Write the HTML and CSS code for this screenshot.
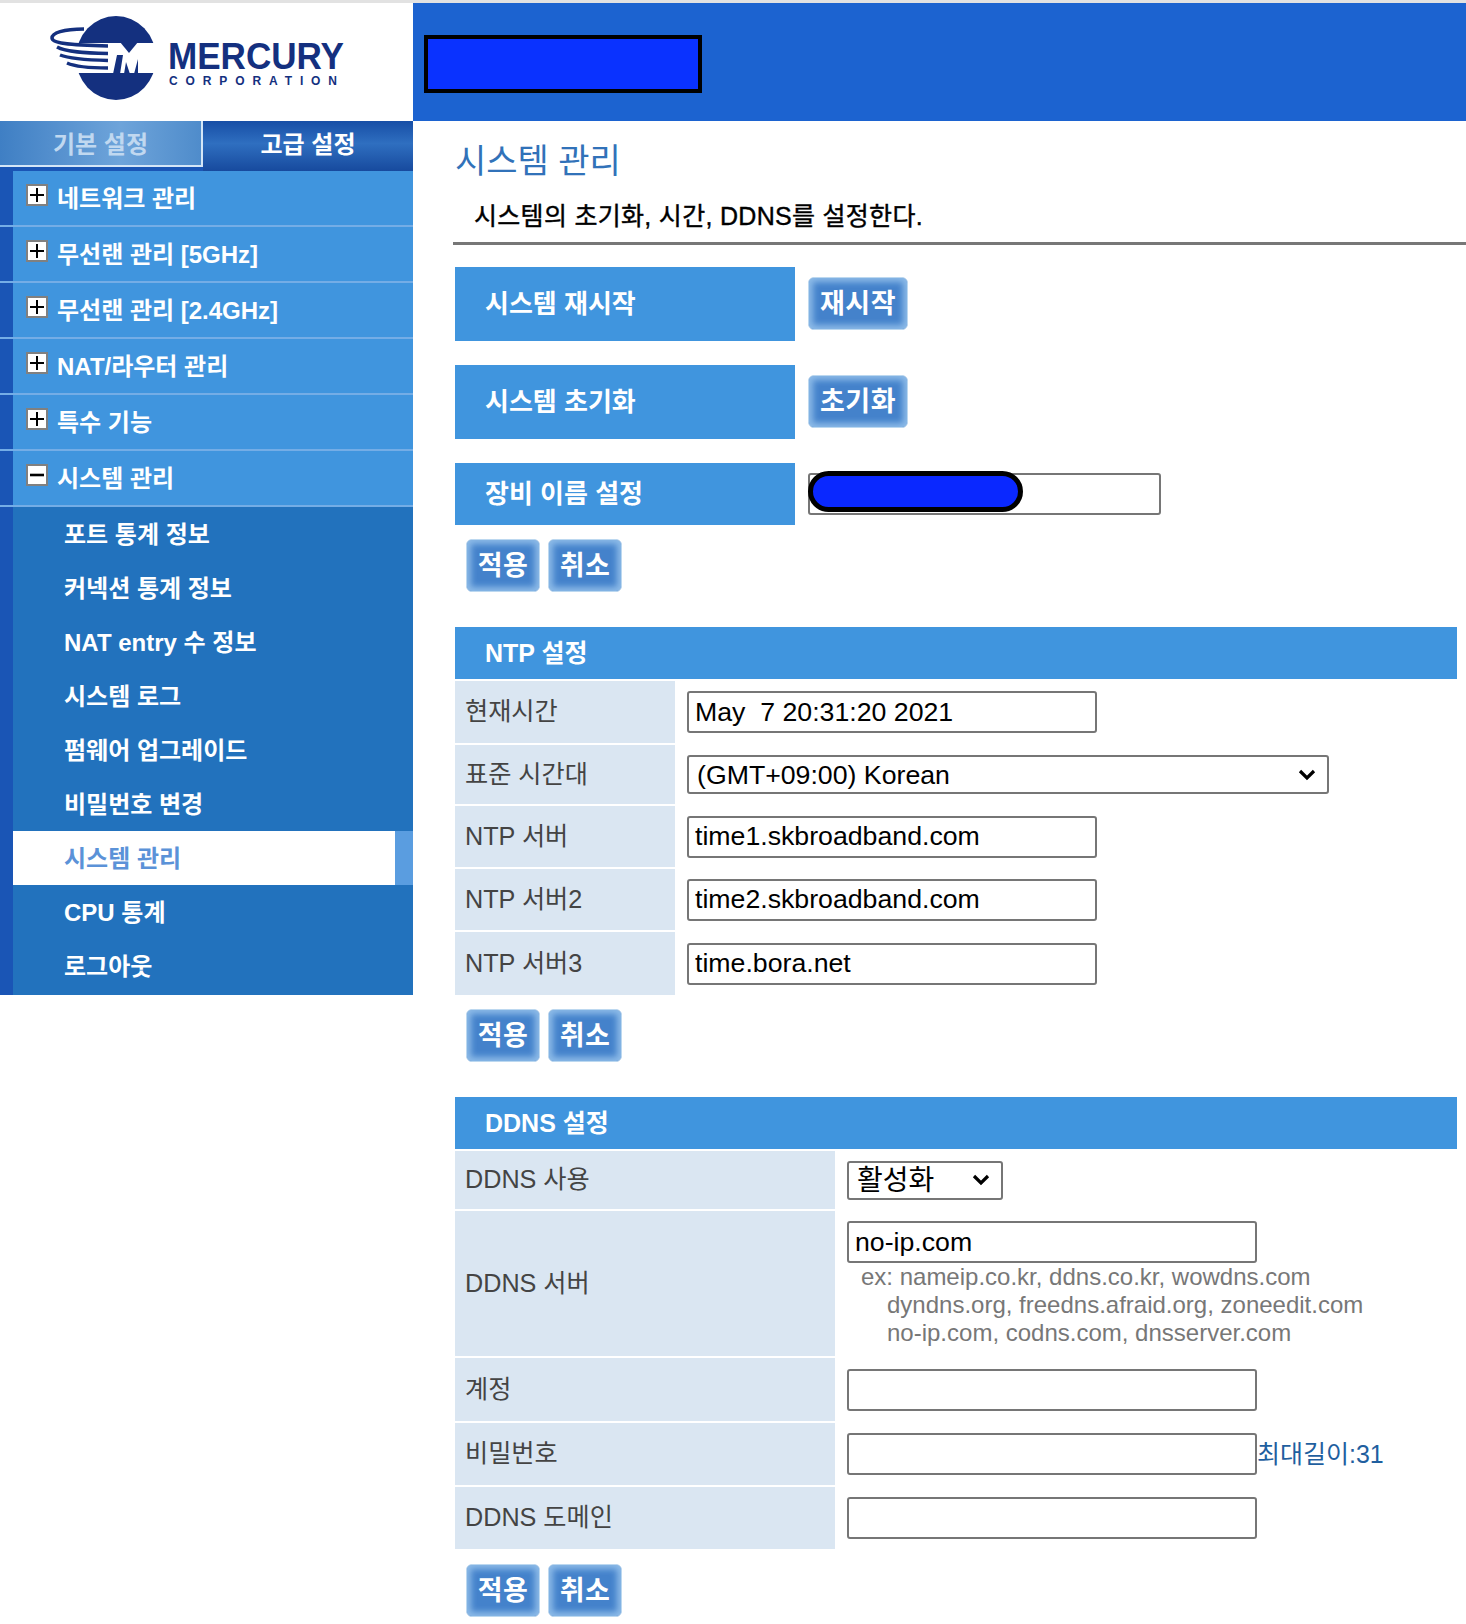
FILE: index.html
```html
<!DOCTYPE html>
<html lang="ko">
<head>
    <meta charset="UTF-8">
    <title>시스템 관리</title>
    <link rel="stylesheet" href="styles.css">
</head>
<body>
    <div class="top">
        <div class="logo">
            <svg width="413" height="118" viewBox="0 0 413 118">
                <ellipse cx="116" cy="55" rx="40" ry="42" fill="#14307f"/>
                <path d="M70 40 H158 V70 H70 Z" fill="#fff"/>
                <path d="M120 39 L129 50 L138 39 Z" fill="#14307f"/>
                <path d="M84 26 C63 26 52 30 52 35 C52 40 67 42 108 43" fill="none" stroke="#14307f" stroke-width="3.5"/>
                <path d="M57 44 C66 49 85 50 108 50.5 M60 52 C70 56 88 57 108 57.5 M67 60 C76 64 90 65 108 65" fill="none" stroke="#14307f" stroke-width="3.5"/>
                <path d="M117 52 L123 52 L120 71 L113 71 Z M124 71 L126 59 L130 71 Z M134 71 L138 56 L138 71 Z" fill="#14307f"/>
                <text x="168" y="66" class="logo-name" textLength="176" lengthAdjust="spacingAndGlyphs">MERCURY</text>
                <text x="169" y="82" class="logo-sub" textLength="168">CORPORATION</text>
            </svg>
        </div>
        <div class="banner"><div class="redact"></div></div>
    </div>

    <div class="wrap">
        <aside class="side">
            <div class="tabs">
                <div class="tab tab-off">기본 설정</div>
                <div class="tab tab-on">고급 설정</div>
            </div>
            <ul class="menu">
                <li class="menu-item"><svg class="ico" viewBox="0 0 22 22"><rect x="1" y="1" width="20" height="20" fill="#fff" stroke="#808080" stroke-width="2"/><path d="M4 11 H18 M11 4 V18" stroke="#000" stroke-width="2"/></svg>네트워크 관리</li>
                <li class="menu-item"><svg class="ico" viewBox="0 0 22 22"><rect x="1" y="1" width="20" height="20" fill="#fff" stroke="#808080" stroke-width="2"/><path d="M4 11 H18 M11 4 V18" stroke="#000" stroke-width="2"/></svg>무선랜 관리 [5GHz]</li>
                <li class="menu-item"><svg class="ico" viewBox="0 0 22 22"><rect x="1" y="1" width="20" height="20" fill="#fff" stroke="#808080" stroke-width="2"/><path d="M4 11 H18 M11 4 V18" stroke="#000" stroke-width="2"/></svg>무선랜 관리 [2.4GHz]</li>
                <li class="menu-item"><svg class="ico" viewBox="0 0 22 22"><rect x="1" y="1" width="20" height="20" fill="#fff" stroke="#808080" stroke-width="2"/><path d="M4 11 H18 M11 4 V18" stroke="#000" stroke-width="2"/></svg>NAT/라우터 관리</li>
                <li class="menu-item"><svg class="ico" viewBox="0 0 22 22"><rect x="1" y="1" width="20" height="20" fill="#fff" stroke="#808080" stroke-width="2"/><path d="M4 11 H18 M11 4 V18" stroke="#000" stroke-width="2"/></svg>특수 기능</li>
                <li class="menu-item"><svg class="ico" viewBox="0 0 22 22"><rect x="1" y="1" width="20" height="20" fill="#fff" stroke="#808080" stroke-width="2"/><path d="M4 11 H18" stroke="#000" stroke-width="2.6"/></svg>시스템 관리</li>
                <li class="sub-item">포트 통계 정보</li>
                <li class="sub-item">커넥션 통계 정보</li>
                <li class="sub-item">NAT entry 수 정보</li>
                <li class="sub-item">시스템 로그</li>
                <li class="sub-item">펌웨어 업그레이드</li>
                <li class="sub-item">비밀번호 변경</li>
                <li class="sub-item sub-on"><span>시스템 관리</span></li>
                <li class="sub-item">CPU 통계</li>
                <li class="sub-item sub-last">로그아웃</li>
            </ul>
        </aside>

        <main class="main">
            <h1 class="title">시스템 관리</h1>
            <p class="desc">시스템의 초기화, 시간, DDNS를 설정한다.</p>

            <div class="act-row">
                <div class="act-label">시스템 재시작</div>
                <button class="btn btn-wide">재시작</button>
            </div>
            <div class="act-row">
                <div class="act-label">시스템 초기화</div>
                <button class="btn btn-wide">초기화</button>
            </div>
            <div class="act-row act-name">
                <div class="act-label">장비 이름 설정</div>
                <div class="name-box"><input class="inp" type="text"><div class="redact-pill"></div></div>
            </div>
            <div class="btns"><button class="btn">적용</button><button class="btn">취소</button></div>

            <div class="sect">NTP 설정</div>
            <div class="form form-ntp">
                <div class="lab">현재시간</div>
                <div class="val"><input class="inp" type="text" value="May  7 20:31:20 2021"></div>
                <div class="lab">표준 시간대</div>
                <div class="val"><select class="sel sel-zone"><option>(GMT+09:00) Korean</option></select></div>
                <div class="lab">NTP 서버</div>
                <div class="val"><input class="inp" type="text" value="time1.skbroadband.com"></div>
                <div class="lab">NTP 서버2</div>
                <div class="val"><input class="inp" type="text" value="time2.skbroadband.com"></div>
                <div class="lab">NTP 서버3</div>
                <div class="val"><input class="inp" type="text" value="time.bora.net"></div>
            </div>
            <div class="btns"><button class="btn">적용</button><button class="btn">취소</button></div>

            <div class="sect">DDNS 설정</div>
            <div class="form form-ddns">
                <div class="lab">DDNS 사용</div>
                <div class="val"><select class="sel sel-on"><option>활성화</option></select></div>
                <div class="lab">DDNS 서버</div>
                <div class="val val-top">
                    <input class="inp" type="text" value="no-ip.com">
                    <div class="hint">ex: nameip.co.kr, ddns.co.kr, wowdns.com<br><span>dyndns.org, freedns.afraid.org, zoneedit.com</span><br><span>no-ip.com, codns.com, dnsserver.com</span></div>
                </div>
                <div class="lab">계정</div>
                <div class="val"><input class="inp" type="text"></div>
                <div class="lab">비밀번호</div>
                <div class="val"><input class="inp" type="text"><span class="maxlen">최대길이:31</span></div>
                <div class="lab">DDNS 도메인</div>
                <div class="val"><input class="inp" type="text"></div>
            </div>
            <div class="btns btns-last"><button class="btn">적용</button><button class="btn">취소</button></div>
        </main>
    </div>
</body>
</html>
```

FILE: styles.css
```css
* {
    box-sizing: border-box;
}
body {
    margin: 0;
    background: #fff;
    border-top: 3px solid #e2e2e2;
    font-family: "Liberation Sans", "Noto Sans CJK KR", sans-serif;
}
.top {
    display: flex;
    height: 118px;
}
.logo {
    width: 413px;
}
.logo svg {
    display: block;
}
.logo-name {
    font-family: "Liberation Sans", sans-serif;
    font-size: 37px;
    font-weight: bold;
    fill: #14307f;
}
.logo-sub {
    font-family: "Liberation Sans", sans-serif;
    font-size: 12px;
    font-weight: bold;
    fill: #14307f;
}
.banner {
    flex: 1;
    background: #1c63d0;
    padding: 32px 0 0 11px;
}
.redact {
    width: 278px;
    height: 58px;
    background: #0a32ff;
    border: 4px solid #000;
}

.wrap {
    display: flex;
}
.side {
    width: 413px;
}
.tabs {
    display: flex;
    height: 50px;
    background: #1a55b5;
}
.tab {
    text-align: center;
    font-size: 24px;
    line-height: 47px;
    font-weight: bold;
}
.tab-off {
    width: 203px;
    height: 46px;
    background: linear-gradient(to right, #3f7fc4, #6ea4da 60%, #4f8ccb);
    border-right: 2px solid #d4e6f7;
    border-bottom: 2px solid #d4e6f7;
    color: #c0d8f0;
}
.tab-on {
    flex: 1;
    background: linear-gradient(to bottom, #174ea6, #2f6fc0 45%, #174a9e);
    color: #fff;
}

.menu {
    list-style: none;
    margin: 0;
    padding: 0;
    color: #fff;
    font-size: 24px;
    font-weight: bold;
}
.menu-item {
    display: flex;
    align-items: center;
    height: 56px;
    padding: 0 0 3px 26px;
    background: linear-gradient(to right, #1a55b5 13px, #4095de 13px);
    border-bottom: 2px solid #74ade6;
}
.ico {
    width: 22px;
    height: 22px;
    margin: -3px 9px 0 0;
    flex: none;
}
.sub-item {
    height: 54px;
    line-height: 55px;
    padding-left: 64px;
    background: linear-gradient(to right, #1a55b5 13px, #2272bd 13px);
}
.sub-last {
    height: 56px;
}
.sub-on {
    padding: 0 0 0 13px;
}
.sub-on span {
    display: block;
    height: 54px;
    margin-right: 18px;
    padding-left: 51px;
    background: #fff;
    color: #5b92d8;
    box-shadow: 18px 0 0 #5a9de0;
}

.main {
    flex: 1;
    padding: 0 9px 0 42px;
}
.title {
    margin: 0;
    height: 76px;
    padding-top: 2px;
    font-size: 34px;
    font-weight: normal;
    line-height: 76px;
    color: #3172b9;
}
.desc {
    margin: 0 -9px 0 -2px;
    height: 48px;
    padding: 1px 0 0 21px;
    border-bottom: 3px solid #777;
    font-size: 25px;
    line-height: 36px;
    color: #000;
    -webkit-text-stroke: 0.4px #000;
    letter-spacing: 0.3px;
}
.act-row {
    display: flex;
    align-items: center;
    gap: 13px;
    height: 74px;
    margin-top: 24px;
}
.act-row:first-of-type {
    margin-top: 22px;
}
.act-name {
    height: 62px;
}
.act-label {
    width: 340px;
    height: 100%;
    padding: 0 0 5px 30px;
    display: flex;
    align-items: center;
    background: #4095de;
    color: #fff;
    font-size: 26px;
    font-weight: bold;
}
.btn {
    width: 74px;
    height: 53px;
    padding: 0 0 4px;
    background: #4482cb;
    border: 1px solid #bcd8f0;
    border-radius: 6px;
    box-shadow: inset 0 0 6px 4px #8dbbe8;
    color: #fff;
    font-family: inherit;
    font-size: 27px;
    font-weight: bold;
    letter-spacing: 0.5px;
}
.btn-wide {
    width: 100px;
    margin-top: -2px;
}
.btns {
    display: flex;
    gap: 8px;
    padding: 14px 0 35px 11px;
}
.btns-last {
    padding-top: 15px;
}
.name-box {
    position: relative;
    width: 353px;
}
.redact-pill {
    position: absolute;
    left: 0;
    top: -2px;
    width: 215px;
    height: 41px;
    background: #0a28ff;
    border: 5px solid #000;
    border-radius: 21px;
}
.sect {
    height: 52px;
    padding-left: 30px;
    background: #4095de;
    color: #fff;
    font-size: 25px;
    font-weight: bold;
    line-height: 52px;
}
.form {
    display: grid;
    row-gap: 2px;
    margin-top: 2px;
}
.form-ntp {
    grid-template-columns: 220px 1fr;
    grid-template-rows: 62px 59px 61px 61px 63px;
}
.form-ddns {
    grid-template-columns: 380px 1fr;
    grid-template-rows: 58px 145px 63px 62px 62px;
}
.lab {
    display: flex;
    align-items: center;
    padding: 0 0 6px 10px;
    background: #dae6f2;
    color: #444;
    font-size: 25.2px;
}
.val {
    display: flex;
    align-items: center;
    padding-left: 12px;
}
.val-top {
    display: block;
    padding-top: 10px;
}
.inp {
    display: block;
    flex: none;
    width: 410px;
    height: 42px;
    margin: 0;
    padding: 0 6px;
    border: 2px solid #767676;
    border-radius: 3px;
    background: #fff;
    color: #000;
    font-family: inherit;
    font-size: 26.7px;
}
.name-box .inp {
    width: 353px;
}
.sel {
    appearance: none;
    height: 39px;
    padding: 0 0 0 8px;
    border: 2px solid #767676;
    border-radius: 3px;
    background: #fff url("data:image/svg+xml,%3Csvg xmlns='http://www.w3.org/2000/svg' width='20' height='12'%3E%3Cpath d='M3 2 L10 9 L17 2' fill='none' stroke='%23000' stroke-width='3.2'/%3E%3C/svg%3E") no-repeat right 10px center;
    color: #000;
    font-family: inherit;
    font-size: 26.7px;
}
.sel-zone {
    width: 642px;
}
.sel-on {
    width: 156px;
    font-size: 28px;
}
.hint {
    padding: 0 0 0 14px;
    color: #777;
    font-size: 24px;
    line-height: 28px;
}
.hint span {
    padding-left: 26px;
}
.maxlen {
    margin-top: -4px;
    color: #1f5f9f;
    font-size: 25px;
}
```
